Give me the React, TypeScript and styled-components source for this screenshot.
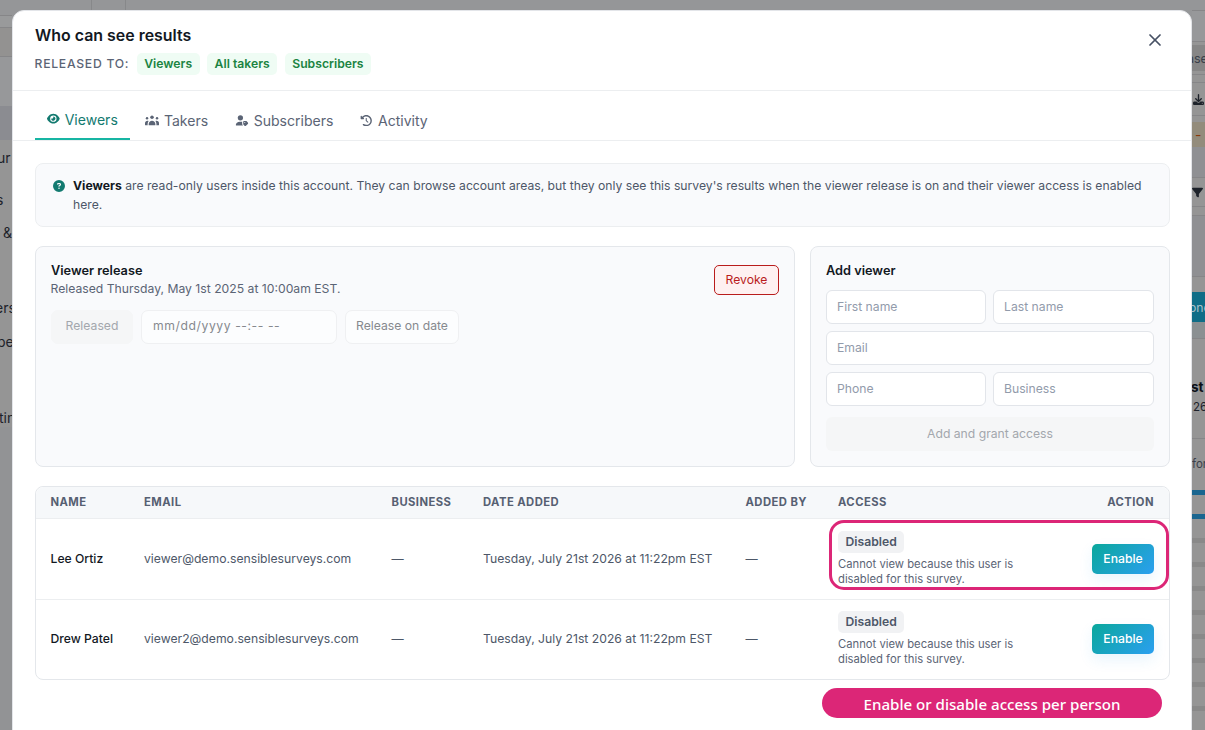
import React from "react";
import styled, { createGlobalStyle, css } from "styled-components";
import {
  FaCircleQuestion,
  FaClockRotateLeft,
  FaDownload,
  FaEye,
  FaFilter,
} from "react-icons/fa6";
import { X } from "lucide-react";

const GlobalStyle = createGlobalStyle`
  * { box-sizing: border-box; }
  body {
    margin: 0;
    overflow: hidden;
    background: #959698;
    font-family: Inter, "Liberation Sans", sans-serif;
    font-size: 12.19px;
    color: #12181f;
  }
  input, button { font: inherit; margin: 0; }
`;

const Screen = styled.div`
  position: relative;
  height: 730px;
  overflow: hidden;
`;

/* Dimmed page behind the dialog */
const Page = styled.div`
  display: flex;
  justify-content: space-between;
  height: 730px;
`;

const TopLines = styled.div`
  flex: 1;
  height: 10px;
  display: flex;
`;

const TopCell = styled.div<{ $w: number }>`
  width: ${(p) => p.$w}px;
  border-right: 1px solid #87888a;
`;

const Rail = styled.div<{ $w: number }>`
  width: ${(p) => p.$w}px;
  display: flex;
  flex-direction: column;
  overflow: hidden;
`;

const Strip = styled.div<{
  $h: number;
  $bg?: string;
  $line?: boolean;
  $indent?: number;
  $size?: number;
  $bold?: boolean;
  $color?: string;
}>`
  flex: none;
  height: ${(p) => p.$h}px;
  background: ${(p) => p.$bg || "#959595"};
  border-bottom: ${(p) => (p.$line ? "1px solid #868688" : "0")};
  display: flex;
  align-items: center;
  text-indent: ${(p) => p.$indent || 0}px;
  white-space: nowrap;
  font-size: ${(p) => p.$size || 14}px;
  font-weight: ${(p) => (p.$bold ? 700 : 400)};
  color: ${(p) => p.$color || "#1d222a"};
  svg {
    flex: none;
  }
`;

const Dialog = styled.section`
  position: absolute;
  left: 12px;
  top: 10px;
  width: 1180px;
  height: 760px;
  background: #fff;
  border: 1px solid #e3e5e9;
  border-radius: 12px;
  overflow: hidden;
`;

const Header = styled.header`
  height: 80px;
  padding: 14px 22px 0;
  display: flex;
  justify-content: space-between;
  border-bottom: 1px solid #eceef0;
`;

const Title = styled.h1`
  margin: 0;
  font-size: 15.94px;
  line-height: 22px;
  font-weight: 600;
`;

const ReleasedRow = styled.div`
  display: flex;
  align-items: center;
  gap: 7.5px;
  margin-top: 6px;
`;

const ReleasedLabel = styled.span`
  margin-left: -0.5px;
  padding-bottom: 1px;
  font-size: 12.19px;
  font-weight: 500;
  letter-spacing: 0.73px;
  color: #5b6475;
`;

const Tag = styled.span<{ $muted?: boolean }>`
  display: inline-flex;
  align-items: center;
  height: 22px;
  padding: 0 7.5px 1px;
  border-radius: 5px;
  font-size: 12.19px;
  font-weight: 600;
  ${(p) =>
    p.$muted
      ? css`
          background: #f1f2f4;
          color: #4d5768;
        `
      : css`
          background: #effcf4;
          color: #1b8442;
        `}
`;

const CloseButton = styled.button`
  align-self: flex-start;
  display: flex;
  margin-top: 5px;
  margin-right: 4px;
  padding: 0;
  border: 0;
  background: none;
  color: #475164;
`;

const Tabs = styled.nav`
  height: 50px;
  padding: 0 22px;
  display: flex;
  align-items: flex-end;
  gap: 3px;
  border-bottom: 1px solid #eceef0;
`;

const Tab = styled.button<{ $active?: boolean; $icon: number }>`
  display: flex;
  align-items: center;
  gap: 5px;
  height: ${(p) => (p.$active ? 40 : 39)}px;
  padding: 0 12px;
  border: 0;
  border-bottom: ${(p) => (p.$active ? "2px solid #17b5a3" : "0")};
  background: none;
  font-size: 14.06px;
  color: ${(p) => (p.$active ? "#137a70" : "#5b6475")};
  svg {
    flex: none;
    width: ${(p) => p.$icon}px;
    height: 11.25px;
  }
`;

const Body = styled.div`
  padding: 22px 21px 0 22px;
`;

const Notice = styled.div`
  display: flex;
  gap: 8.5px;
  height: 64px;
  padding: 12px 17px 0 16.5px;
  border: 1px solid #eceef0;
  border-radius: 8px;
  background: #f9fafc;
  line-height: 19px;
  color: #4d5768;
  svg {
    flex: none;
    width: 12px;
    height: 12px;
    margin-top: 4px;
    color: #137a70;
  }
  p {
    margin: 0;
  }
  strong {
    color: #12181f;
    font-weight: 700;
  }
`;

const Panels = styled.div`
  display: grid;
  grid-template-columns: 760px 360px;
  gap: 15px;
  margin-top: 19px;
`;

const Panel = styled.section`
  height: 221px;
  padding: 15px 15px 0;
  border: 1px solid #e4e7eb;
  border-radius: 8px;
  background: #f9fafc;
`;

const PanelTitle = styled.h2`
  margin: 0;
  font-size: 12.75px;
  line-height: 18px;
  font-weight: 600;
`;

const PanelHead = styled.div`
  display: flex;
  justify-content: space-between;
  height: 48px;
`;

const PanelNote = styled.p`
  margin: 0 0 0 -0.5px;
  line-height: 18px;
  color: #5b6475;
`;

const RevokeButton = styled.button`
  width: 65px;
  height: 30px;
  margin-top: 3px;
  padding: 0 0 2px;
  border: 1px solid #b91c1c;
  border-radius: 5px;
  background: #fef1f1;
  color: #b91c1c;
`;

const Controls = styled.div`
  display: flex;
  gap: 8px;
`;

const Control = styled.div<{ $w: number; $filled?: boolean; $spaced?: boolean }>`
  width: ${(p) => p.$w}px;
  height: 34px;
  display: flex;
  align-items: center;
  justify-content: ${(p) => (p.$spaced ? "flex-start" : "center")};
  padding-left: ${(p) => (p.$spaced ? 11 : 0)}px;
  padding-bottom: 3px;
  border: 1px solid ${(p) => (p.$filled ? "#f5f6f7" : "#eff0f2")};
  border-radius: 7px;
  background: ${(p) => (p.$filled ? "#f5f6f7" : "#fcfdfe")};
  letter-spacing: ${(p) => (p.$spaced ? 0.57 : 0)}px;
  color: ${(p) => (p.$filled ? "#a3a7ad" : "#86898e")};
`;

const Form = styled.form`
  display: grid;
  grid-template-columns: 160px 161px;
  column-gap: 7px;
  row-gap: 7.5px;
  margin-top: 10px;
`;

const Field = styled.input<{ $wide?: boolean }>`
  grid-column: ${(p) => (p.$wide ? "1 / -1" : "auto")};
  width: 100%;
  height: 33.5px;
  padding: 0 10px;
  border: 1px solid #e2e5ea;
  border-radius: 6px;
  background: #fff;
  &::placeholder {
    color: #929bab;
    opacity: 1;
  }
`;

const SubmitButton = styled.button`
  grid-column: 1 / -1;
  height: 34px;
  margin-top: 3.5px;
  border: 0;
  border-radius: 6px;
  background: #f5f6f7;
  color: #a3a7ad;
`;

const Table = styled.div`
  margin-top: 19px;
  border: 1px solid #e4e7eb;
  border-radius: 8px;
`;

const rowGrid = css`
  display: grid;
  grid-template-columns: 93.5px 247.5px 91.5px 262.5px 92.5px 1fr auto;
  align-items: center;
  padding: 0 15px 0 14.5px;
`;

const HeadRow = styled.div`
  ${rowGrid}
  height: 32px;
  padding-bottom: 1px;
  border-bottom: 1px solid #eceef0;
  border-radius: 8px 8px 0 0;
  background: #f6f8fa;
  font-size: 11.25px;
  font-weight: 700;
  letter-spacing: 0.44px;
  color: #566072;
`;

const Row = styled.div<{ $divided?: boolean }>`
  ${rowGrid}
  position: relative;
  height: ${(p) => (p.$divided ? 81 : 79)}px;
  padding-bottom: ${(p) => (p.$divided ? 0 : 1)}px;
  border-bottom: ${(p) => (p.$divided ? "1px solid #eceef0" : "0")};
  color: #4d5768;
  > span {
    padding-bottom: 1px;
  }
`;

const PersonName = styled.span`
  color: #12181f;
  font-weight: 500;
`;

const AccessNote = styled.p`
  margin: 4px 0 0;
  width: 200px;
  font-size: 11.25px;
  line-height: 15px;
  color: #5b6475;
`;

const EnableButton = styled.button`
  width: 62px;
  height: 30px;
  padding: 0 0 2px;
  border: 0;
  border-radius: 5px;
  background: linear-gradient(135deg, #0aa89c, #2b9ff0);
  box-shadow: 0 6px 14px rgba(43, 159, 240, 0.1);
  color: #fff;
  font-weight: 500;
`;

/* Annotation drawn over the first row */
const Highlight = styled.div`
  position: absolute;
  top: 1px;
  left: 793px;
  width: 340px;
  height: 70px;
  border: 3.5px solid #dc2677;
  border-radius: 15px;
  pointer-events: none;
`;

const Callout = styled.div`
  width: 340px;
  height: 30px;
  margin: 8px 8px 0 auto;
  border-radius: 15px;
  background: #dc2677;
  color: #fff;
  font-family: "Noto Sans", "Open Sans", sans-serif;
  font-size: 15.1px;
  font-weight: 500;
  line-height: 32px;
  text-align: center;
`;

const viewers = [
  { name: "Lee Ortiz", email: "viewer@demo.sensiblesurveys.com", highlighted: true },
  { name: "Drew Patel", email: "viewer2@demo.sensiblesurveys.com", highlighted: false },
];

const stripes = Array.from({ length: 8 });

function PeopleIcon() {
  return (
    <svg viewBox="0 0 640 512" fill="currentColor" aria-hidden="true">
      <circle cx="320" cy="104" r="80" />
      <circle cx="92" cy="152" r="56" />
      <circle cx="548" cy="152" r="56" />
      <path d="M168 456v-40c0-84 68-152 152-152s152 68 152 152v40c0 9-7 16-16 16H184c-9 0-16-7-16-16z" />
      <path d="M0 376c0-66 50-120 112-120 18 0 35 4 50 12-26 38-42 86-42 140v40c0 9 2 17 5 24H28c-16 0-28-12-28-28z" />
      <path d="M640 376c0-66-50-120-112-120-18 0-35 4-50 12 26 38 42 86 42 140v40c0 9-2 17-5 24h97c16 0 28-12 28-28z" />
    </svg>
  );
}

function PersonTagIcon() {
  return (
    <svg viewBox="0 0 576 512" fill="currentColor" aria-hidden="true">
      <circle cx="224" cy="128" r="120" />
      <path d="M194 304h60c18 0 34 3 50 8v86c0 25 10 50 28 68l14 14H46c-17 0-30-13-30-30 0-81 80-146 178-146z" />
      <path
        fillRule="evenodd"
        d="M352 400V304c0-18 14-32 32-32h93c13 0 25 5 34 14l50 50c19 19 19 49 0 68l-82 82c-19 19-49 19-68 0l-45-45c-9-9-14-26-14-41zm72-32a24 24 0 1 0 0-48 24 24 0 1 0 0 48z"
      />
    </svg>
  );
}

function BackgroundPage() {
  return (
    <Page>
      <Rail $w={12}>
        <Strip $h={16} $bg="#959698" $line />
        <Strip $h={12} $bg="#999a9b" $line />
        <Strip $h={29} $bg="#939291" $line />
        <Strip $h={49} $bg="#97989a" />
        <Strip $h={34} $bg="#8b8c91" />
        <Strip $h={35} $indent={-3}>ur</Strip>
        <Strip $h={49} $indent={-4}>s</Strip>
        <Strip $h={17} $indent={3}>&amp;</Strip>
        <Strip $h={57} />
        <Strip $h={18} $indent={-5}>ers</Strip>
        <Strip $h={16} />
        <Strip $h={18} $indent={-3}>pe</Strip>
        <Strip $h={57} />
        <Strip $h={20} $indent={-1}>tin</Strip>
        <Strip $h={304} $bg="#929395" />
      </Rail>
      <TopLines>
        <TopCell $w={80} />
        <TopCell $w={34} />
      </TopLines>
      <Rail $w={13}>
        <Strip $h={11} $bg="#959698" $line />
        <Strip $h={31} $bg="#97989a" $line />
        <Strip $h={3} />
        <Strip $h={26} $bg="#868686" $size={12.5} $indent={-5} $color="#3a404a">ase</Strip>
        <Strip $h={4} $line />
        <Strip $h={8} $line />
        <Strip $h={33} $line>&#8202;<FaDownload size={11} /></Strip>
        <Strip $h={6} />
        <Strip $h={25} $bg="#938c7c" $color="#8a3a0c" $indent={3}>-</Strip>
        <Strip $h={31} $bg="#8f9093" $line />
        <Strip $h={29} $line><FaFilter size={11} /></Strip>
        <Strip $h={9} $line />
        <Strip $h={61} $bg="#8f9093" $line />
        <Strip $h={15} />
        <Strip $h={30} $bg="#106d87" $color="#a9c1c9" $size={12.2} $indent={-3}>one</Strip>
        <Strip $h={17} $bg="#8b9092" $line />
        <Strip $h={38} />
        <Strip $h={20} $bold $size={13.5} $indent={-1} $color="#0d1117">st</Strip>
        <Strip $h={20} $size={11.5} $indent={1}>26</Strip>
        <Strip $h={22} $line />
        <Strip $h={15} />
        <Strip $h={19} $size={11.5} $color="#3a404a">for</Strip>
        <Strip $h={17} />
        <Strip $h={5} $bg="#1a6690" />
        <Strip $h={19} />
        <Strip $h={5} $bg="#1a6690" />
        <Strip $h={19} />
        {stripes.map((_, i) => (
          <React.Fragment key={i}>
            <Strip $h={5} $bg="#898989" />
            <Strip $h={19} />
          </React.Fragment>
        ))}
      </Rail>
    </Page>
  );
}

export default function App() {
  return (
    <Screen>
      <GlobalStyle />
      <BackgroundPage />
      <Dialog>
        <Header>
          <div>
            <Title>Who can see results</Title>
            <ReleasedRow>
              <ReleasedLabel>RELEASED TO:</ReleasedLabel>
              <Tag>Viewers</Tag>
              <Tag>All takers</Tag>
              <Tag>Subscribers</Tag>
            </ReleasedRow>
          </div>
          <CloseButton aria-label="Close">
            <X size={20} strokeWidth={2.1} />
          </CloseButton>
        </Header>
        <Tabs>
          <Tab $active $icon={12.66}><FaEye />Viewers</Tab>
          <Tab $icon={14.06}><PeopleIcon />Takers</Tab>
          <Tab $icon={13.6}><PersonTagIcon />Subscribers</Tab>
          <Tab $icon={12.5}><FaClockRotateLeft />Activity</Tab>
        </Tabs>
        <Body>
          <Notice>
            <FaCircleQuestion />
            <p>
              <strong>Viewers</strong> are read-only users inside this account. They can browse
              account areas, but they only see this survey's results when the viewer release is on
              and their viewer access is enabled here.
            </p>
          </Notice>
          <Panels>
            <Panel>
              <PanelHead>
                <div>
                  <PanelTitle>Viewer release</PanelTitle>
                  <PanelNote>Released Thursday, May 1st 2025 at 10:00am EST.</PanelNote>
                </div>
                <RevokeButton>Revoke</RevokeButton>
              </PanelHead>
              <Controls>
                <Control $w={82} $filled>Released</Control>
                <Control $w={196} $spaced>mm/dd/yyyy --:-- --</Control>
                <Control $w={114}>Release on date</Control>
              </Controls>
            </Panel>
            <Panel>
              <PanelTitle>Add viewer</PanelTitle>
              <Form>
                <Field placeholder="First name" />
                <Field placeholder="Last name" />
                <Field placeholder="Email" $wide />
                <Field placeholder="Phone" />
                <Field placeholder="Business" />
                <SubmitButton type="button">Add and grant access</SubmitButton>
              </Form>
            </Panel>
          </Panels>
          <Table>
            <HeadRow>
              <span>NAME</span>
              <span>EMAIL</span>
              <span>BUSINESS</span>
              <span>DATE ADDED</span>
              <span>ADDED BY</span>
              <span>ACCESS</span>
              <span>ACTION</span>
            </HeadRow>
            {viewers.map((v) => (
              <Row key={v.email} $divided={v.highlighted}>
                <PersonName>{v.name}</PersonName>
                <span>{v.email}</span>
                <span>—</span>
                <span>Tuesday, July 21st 2026 at 11:22pm EST</span>
                <span>—</span>
                <div>
                  <Tag $muted>Disabled</Tag>
                  <AccessNote>Cannot view because this user is disabled for this survey.</AccessNote>
                </div>
                <EnableButton>Enable</EnableButton>
                {v.highlighted && <Highlight />}
              </Row>
            ))}
          </Table>
          <Callout>Enable or disable access per person</Callout>
        </Body>
      </Dialog>
    </Screen>
  );
}
